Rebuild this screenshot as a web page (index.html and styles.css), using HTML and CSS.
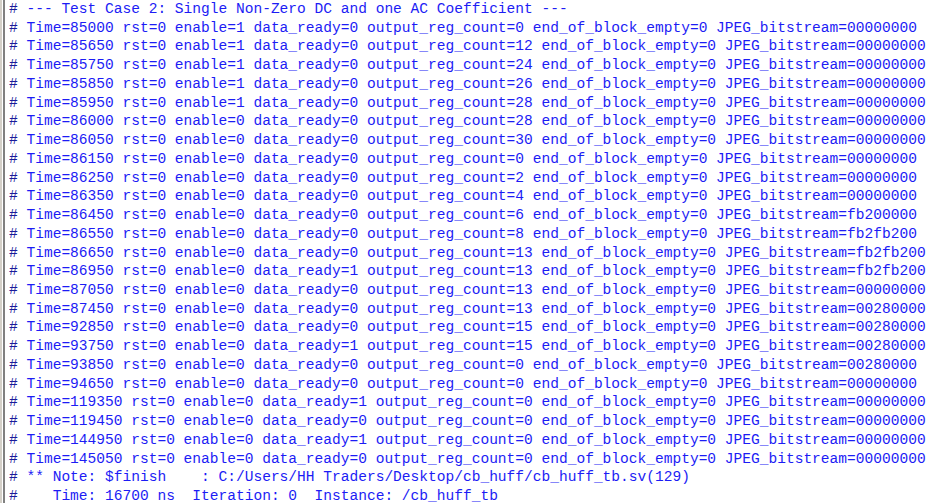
FILE: index.html
```html
<!DOCTYPE html>
<html>
<head>
<meta charset="utf-8">
<link rel="stylesheet" href="styles.css">
</head>
<body>
<div class="frame">
<pre class="transcript"><span class="h">#</span> --- Test Case 2: Single Non-Zero DC and one AC Coefficient ---
<span class="h">#</span> Time=85000 rst=0 enable=1 data_ready=0 output_reg_count=0 end_of_block_empty=0 JPEG_bitstream=00000000
<span class="h">#</span> Time=85650 rst=0 enable=1 data_ready=0 output_reg_count=12 end_of_block_empty=0 JPEG_bitstream=00000000
<span class="h">#</span> Time=85750 rst=0 enable=1 data_ready=0 output_reg_count=24 end_of_block_empty=0 JPEG_bitstream=00000000
<span class="h">#</span> Time=85850 rst=0 enable=1 data_ready=0 output_reg_count=26 end_of_block_empty=0 JPEG_bitstream=00000000
<span class="h">#</span> Time=85950 rst=0 enable=1 data_ready=0 output_reg_count=28 end_of_block_empty=0 JPEG_bitstream=00000000
<span class="h">#</span> Time=86000 rst=0 enable=0 data_ready=0 output_reg_count=28 end_of_block_empty=0 JPEG_bitstream=00000000
<span class="h">#</span> Time=86050 rst=0 enable=0 data_ready=0 output_reg_count=30 end_of_block_empty=0 JPEG_bitstream=00000000
<span class="h">#</span> Time=86150 rst=0 enable=0 data_ready=0 output_reg_count=0 end_of_block_empty=0 JPEG_bitstream=00000000
<span class="h">#</span> Time=86250 rst=0 enable=0 data_ready=0 output_reg_count=2 end_of_block_empty=0 JPEG_bitstream=00000000
<span class="h">#</span> Time=86350 rst=0 enable=0 data_ready=0 output_reg_count=4 end_of_block_empty=0 JPEG_bitstream=00000000
<span class="h">#</span> Time=86450 rst=0 enable=0 data_ready=0 output_reg_count=6 end_of_block_empty=0 JPEG_bitstream=fb200000
<span class="h">#</span> Time=86550 rst=0 enable=0 data_ready=0 output_reg_count=8 end_of_block_empty=0 JPEG_bitstream=fb2fb200
<span class="h">#</span> Time=86650 rst=0 enable=0 data_ready=0 output_reg_count=13 end_of_block_empty=0 JPEG_bitstream=fb2fb200
<span class="h">#</span> Time=86950 rst=0 enable=0 data_ready=1 output_reg_count=13 end_of_block_empty=0 JPEG_bitstream=fb2fb200
<span class="h">#</span> Time=87050 rst=0 enable=0 data_ready=0 output_reg_count=13 end_of_block_empty=0 JPEG_bitstream=00000000
<span class="h">#</span> Time=87450 rst=0 enable=0 data_ready=0 output_reg_count=13 end_of_block_empty=0 JPEG_bitstream=00280000
<span class="h">#</span> Time=92850 rst=0 enable=0 data_ready=0 output_reg_count=15 end_of_block_empty=0 JPEG_bitstream=00280000
<span class="h">#</span> Time=93750 rst=0 enable=0 data_ready=1 output_reg_count=15 end_of_block_empty=0 JPEG_bitstream=00280000
<span class="h">#</span> Time=93850 rst=0 enable=0 data_ready=0 output_reg_count=0 end_of_block_empty=0 JPEG_bitstream=00280000
<span class="h">#</span> Time=94650 rst=0 enable=0 data_ready=0 output_reg_count=0 end_of_block_empty=0 JPEG_bitstream=00000000
<span class="h">#</span> Time=119350 rst=0 enable=0 data_ready=1 output_reg_count=0 end_of_block_empty=0 JPEG_bitstream=00000000
<span class="h">#</span> Time=119450 rst=0 enable=0 data_ready=0 output_reg_count=0 end_of_block_empty=0 JPEG_bitstream=00000000
<span class="h">#</span> Time=144950 rst=0 enable=0 data_ready=1 output_reg_count=0 end_of_block_empty=0 JPEG_bitstream=00000000
<span class="h">#</span> Time=145050 rst=0 enable=0 data_ready=0 output_reg_count=0 end_of_block_empty=0 JPEG_bitstream=00000000
<span class="h">#</span> ** Note: $finish    : C:/Users/HH Traders/Desktop/cb_huff/cb_huff_tb.sv(129)
<span class="h">#</span>    Time: 16700 ns  Iteration: 0  Instance: /cb_huff_tb</pre>
</div>
</body>
</html>
```

FILE: styles.css
```css
html, body {
  margin: 0;
  padding: 0;
  background: #ffffff;
  width: 930px;
  height: 503px;
  overflow: hidden;
}

.frame {
  height: 503px;
  border-left: 2px solid #d4d0c8;
  box-sizing: border-box;
  display: flex;
}

.transcript {
  margin: 0;
  flex: 1;
  border-left: 2px solid #808080;
  margin-left: 1px;
  padding: 0 0 0 4px;
  font-family: "Liberation Mono", "Courier New", monospace;
  font-size: 14.55px;
  line-height: 18.73px;
  color: #1c1cf5;
  white-space: pre;
  overflow: hidden;
}

.h {
  color: #1a1a9a;
}
```
